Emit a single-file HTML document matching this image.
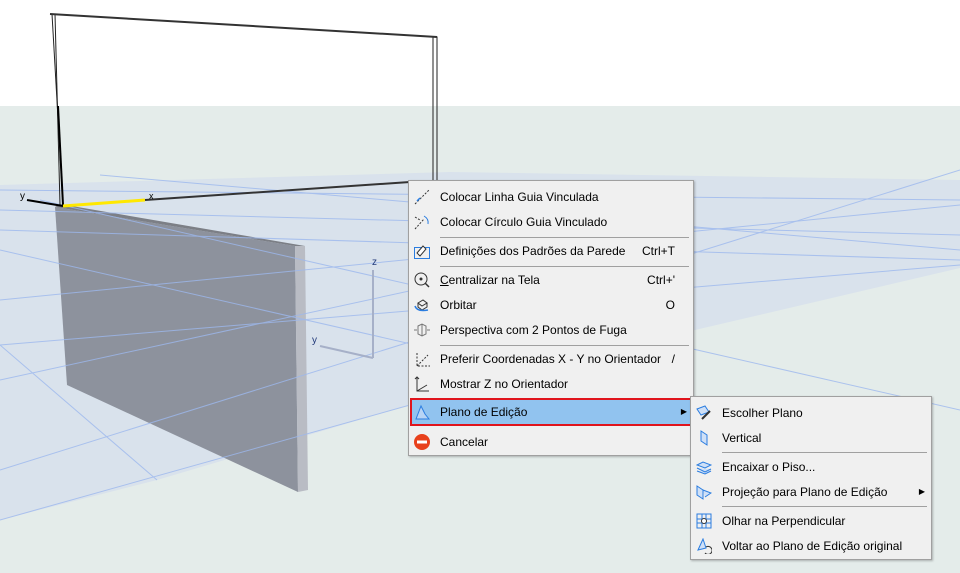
<!DOCTYPE html>
<html><head><meta charset="utf-8"><style>
*{margin:0;padding:0;box-sizing:border-box}
body{width:960px;height:573px;overflow:hidden;position:relative;background:#e4ecea;font-family:"Liberation Sans",Tahoma,sans-serif;font-size:12px;color:#000}
svg.bg{position:absolute;left:0;top:0}
.menu{position:absolute;background:#f0f0f0;border:1px solid #a0a0a0;box-shadow:1px 1px 2px rgba(0,0,0,.25)}
.it{position:absolute;left:0;right:0;height:24px;line-height:24px;padding-left:31px;white-space:nowrap}
.it .k{position:absolute;right:18px;top:0}
.ic{position:absolute;left:5px;top:4px;width:16px;height:16px}
.sep{position:absolute;height:1px;background:#a0a0a0}
</style></head><body>
<svg class="bg" width="960" height="573">
<rect x="0" y="0" width="960" height="106" fill="#fff"/>
<polygon points="0,185 450,172 960,180 960,268 695,330 410,405 157,480 0,520" fill="#d9e2ec"/>
<polygon points="55,207 295,246 298,492 67,385" fill="#8d929d"/>
<polygon points="295,246 305,246 308,490 298,492" fill="#b9bcc4"/>
<polygon points="55,207 295,246 305,246 60,204" fill="#7c7f86"/>
<g stroke="#9db8ee" stroke-width="1" fill="none" opacity=".8">
<line x1="0" y1="190" x2="960" y2="200"/><line x1="0" y1="210" x2="960" y2="235"/>
<line x1="0" y1="230" x2="960" y2="260"/><line x1="0" y1="300" x2="960" y2="205"/>
<line x1="0" y1="345" x2="960" y2="265"/><line x1="0" y1="380" x2="690" y2="230"/>
<line x1="0" y1="470" x2="960" y2="170"/><line x1="0" y1="520" x2="410" y2="405"/>
<line x1="0" y1="345" x2="157" y2="480"/><line x1="40" y1="200" x2="960" y2="410"/>
<line x1="100" y1="175" x2="960" y2="250"/><line x1="0" y1="250" x2="700" y2="410"/>
</g>
<line x1="373" y1="270" x2="373" y2="358" stroke="#a6b0c8" stroke-width="2"/>
<line x1="320" y1="346" x2="373" y2="358" stroke="#a6b0c8" stroke-width="2"/>
<text x="372" y="265" font-size="10" fill="#223a7a" font-family="Liberation Sans">z</text>
<text x="312" y="343" font-size="10" fill="#223a7a" font-family="Liberation Sans">y</text>
<g stroke="#222" fill="none" stroke-width="1">
<polyline points="52,14 437,37 437,182"/><polyline points="55,14 60,205"/><polyline points="52,14 63,205"/>
<line x1="433" y1="37" x2="433" y2="182"/>
</g>
<line x1="50" y1="14" x2="437" y2="37" stroke="#333" stroke-width="2"/>
<line x1="58" y1="106" x2="63" y2="205" stroke="#000" stroke-width="2"/>
<line x1="27" y1="200" x2="63" y2="206" stroke="#000" stroke-width="2"/>
<line x1="63" y1="206" x2="145" y2="200" stroke="#ffe800" stroke-width="3"/>
<line x1="145" y1="200" x2="410" y2="182" stroke="#333" stroke-width="2"/>
<text x="20" y="199" font-size="10" fill="#000">y</text>
<text x="149" y="199" font-size="9" fill="#000">x</text>
</svg>

<div class="menu" style="left:408px;top:180px;width:286px;height:276px">
<div class="it" style="top:4px"><svg class="ic" viewBox="0 0 16 16"><path d="M1 15L15 1" stroke="#333" stroke-dasharray="2 1.5"/><path d="M3 12l3-3" stroke="#2b7de0" stroke-width="1.5"/></svg>Colocar Linha Guia Vinculada</div>
<div class="it" style="top:29px"><svg class="ic" viewBox="0 0 16 16"><path d="M1 15L10 5M1 3l5 3" stroke="#333" stroke-dasharray="2 1.5" fill="none"/><path d="M10 2q5 3 4 8" stroke="#2b7de0" fill="none"/></svg>Colocar Círculo Guia Vinculado</div>
<div class="sep" style="left:31px;right:4px;top:56px"></div>
<div class="it" style="top:58px"><svg class="ic" viewBox="0 0 16 16"><rect x="0.5" y="4.5" width="15" height="11" fill="none" stroke="#2b7de0"/><path d="M3 10l6-7 3 3-6 7z" fill="#fff" stroke="#333"/></svg>Definições dos Padrões da Parede<span class="k">Ctrl+T</span></div>
<div class="sep" style="left:31px;right:4px;top:85px"></div>
<div class="it" style="top:87px"><svg class="ic" viewBox="0 0 16 16"><circle cx="7" cy="7" r="6" fill="none" stroke="#333"/><path d="M11 11l4 4" stroke="#333" stroke-width="1.5"/><circle cx="7" cy="7" r="1.5" fill="#333"/></svg><u>C</u>entralizar na Tela<span class="k">Ctrl+'</span></div>
<div class="it" style="top:112px"><svg class="ic" viewBox="0 0 16 16"><path d="M4 6l5-3 4 3-5 3z M4 6v4l4 3 5-3V6" fill="none" stroke="#333"/><path d="M1 9q2 6 13 4" stroke="#2b7de0" stroke-width="1.5" fill="none"/></svg>Orbitar<span class="k">O</span></div>
<div class="it" style="top:137px"><svg class="ic" viewBox="0 0 16 16"><path d="M4 4l4-2 4 2v8l-4 2-4-2z M8 2v12 M0 8h3 M13 8h3" fill="none" stroke="#777"/></svg>Perspectiva com 2 Pontos de Fuga</div>
<div class="sep" style="left:31px;right:4px;top:164px"></div>
<div class="it" style="top:166px"><svg class="ic" viewBox="0 0 16 16"><path d="M3 2v13h13 M3 15l11-11" fill="none" stroke="#333" stroke-dasharray="2 1.5"/></svg>Preferir Coordenadas X - Y no Orientador<span class="k">/</span></div>
<div class="it" style="top:191px"><svg class="ic" viewBox="0 0 16 16"><path d="M3 1v14h12 M3 15l10-6 M1 3l2-2 2 2" fill="none" stroke="#333"/></svg>Mostrar Z no Orientador</div>
<div style="position:absolute;left:1px;top:217px;width:282px;height:28px;background:#91c3ef;border:2px solid #e0141c"></div>
<div class="it" style="top:219px"><svg class="ic" viewBox="0 0 16 16"><path d="M2 15l5-13 4 8 4 5z" fill="#b8d4f5" stroke="#2b7de0"/></svg>Plano de Edição<span style="position:absolute;right:6px;top:0;font-size:8px">▶</span></div>
<div class="it" style="top:249px"><svg class="ic" viewBox="0 0 16 16"><circle cx="8" cy="8" r="8" fill="#e8401c"/><rect x="3" y="6.5" width="10" height="3" fill="#fff"/></svg>Cancelar</div>
</div>

<div class="menu" style="left:690px;top:396px;width:242px;height:164px">
<div class="it" style="top:4px"><svg class="ic" viewBox="0 0 16 16"><path d="M1 4l8-3 4 6-8 3z" fill="#cfe0f7" stroke="#2b7de0"/><path d="M6 14l8-8" stroke="#333" stroke-width="2"/></svg>Escolher Plano</div>
<div class="it" style="top:29px"><svg class="ic" viewBox="0 0 16 16"><path d="M5 1l6 4v10l-6-4z" fill="#cfe0f7" stroke="#2b7de0"/></svg>Vertical</div>
<div class="sep" style="left:31px;right:4px;top:55px"></div>
<div class="it" style="top:58px"><svg class="ic" viewBox="0 0 16 16"><path d="M1 6l6-3 8 3-6 3z M1 9l8 4 6-3 M1 12l8 3 6-3" fill="#cfe0f7" stroke="#2b7de0"/></svg>Encaixar o Piso...</div>
<div class="it" style="top:83px"><svg class="ic" viewBox="0 0 16 16"><path d="M1 2l6 4v9l-6-4z M7 6l8 3-6 4" fill="#cfe0f7" stroke="#2b7de0"/></svg>Projeção para Plano de Edição<span style="position:absolute;right:6px;top:0;font-size:8px">▶</span></div>
<div class="sep" style="left:31px;right:4px;top:109px"></div>
<div class="it" style="top:112px"><svg class="ic" viewBox="0 0 16 16"><path d="M1 1h14v14H1z M1 6h14 M1 10h14 M6 1v14 M10 1v14" fill="none" stroke="#2b7de0"/><circle cx="8" cy="8" r="2.5" fill="#fff" stroke="#333"/></svg>Olhar na Perpendicular</div>
<div class="it" style="top:137px"><svg class="ic" viewBox="0 0 16 16"><path d="M2 12l5-11 3 9z" fill="#cfe0f7" stroke="#2b7de0"/><path d="M10 9a4 4 0 1 1-1 6" fill="none" stroke="#333"/></svg>Voltar ao Plano de Edição original</div>
</div>
</body></html>
